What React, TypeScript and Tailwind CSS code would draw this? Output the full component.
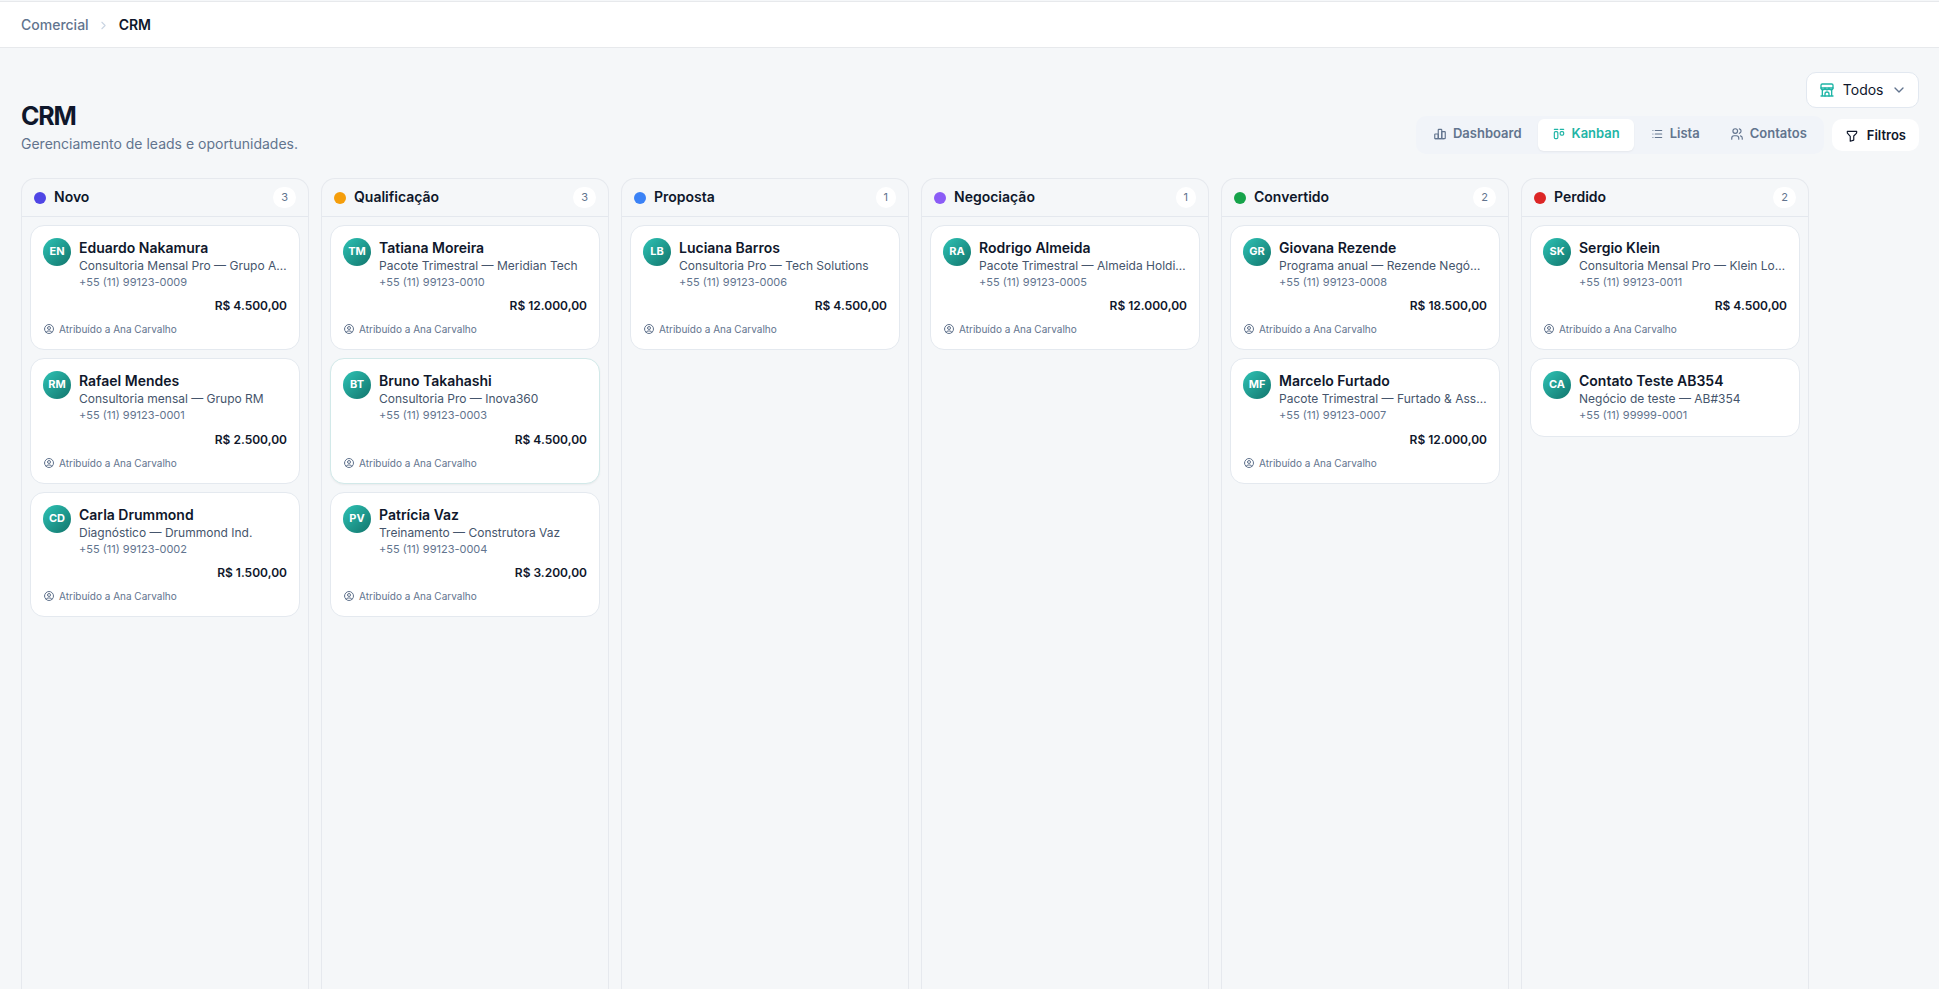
import {
  TbChartBar,
  TbChevronDown,
  TbChevronRight,
  TbFilter,
  TbLayoutKanban,
  TbList,
  TbUserCircle,
  TbUsers,
} from 'react-icons/tb';

interface Lead {
  initials: string;
  name: string;
  deal: string;
  phone: string;
  value?: string;
  active?: boolean;
}

interface Stage {
  title: string;
  dot: string;
  leads: Lead[];
}

const stages: Stage[] = [
  {
    title: 'Novo',
    dot: 'bg-[#4f46e5]',
    leads: [
      { initials: 'EN', name: 'Eduardo Nakamura', deal: 'Consultoria Mensal Pro — Grupo A…', phone: '+55 (11) 99123-0009', value: 'R$ 4.500,00' },
      { initials: 'RM', name: 'Rafael Mendes', deal: 'Consultoria mensal — Grupo RM', phone: '+55 (11) 99123-0001', value: 'R$ 2.500,00' },
      { initials: 'CD', name: 'Carla Drummond', deal: 'Diagnóstico — Drummond Ind.', phone: '+55 (11) 99123-0002', value: 'R$ 1.500,00' },
    ],
  },
  {
    title: 'Qualificação',
    dot: 'bg-[#f59e0b]',
    leads: [
      { initials: 'TM', name: 'Tatiana Moreira', deal: 'Pacote Trimestral — Meridian Tech', phone: '+55 (11) 99123-0010', value: 'R$ 12.000,00' },
      { initials: 'BT', name: 'Bruno Takahashi', deal: 'Consultoria Pro — Inova360', phone: '+55 (11) 99123-0003', value: 'R$ 4.500,00', active: true },
      { initials: 'PV', name: 'Patrícia Vaz', deal: 'Treinamento — Construtora Vaz', phone: '+55 (11) 99123-0004', value: 'R$ 3.200,00' },
    ],
  },
  {
    title: 'Proposta',
    dot: 'bg-[#3b82f6]',
    leads: [
      { initials: 'LB', name: 'Luciana Barros', deal: 'Consultoria Pro — Tech Solutions', phone: '+55 (11) 99123-0006', value: 'R$ 4.500,00' },
    ],
  },
  {
    title: 'Negociação',
    dot: 'bg-[#8b5cf6]',
    leads: [
      { initials: 'RA', name: 'Rodrigo Almeida', deal: 'Pacote Trimestral — Almeida Holdi…', phone: '+55 (11) 99123-0005', value: 'R$ 12.000,00' },
    ],
  },
  {
    title: 'Convertido',
    dot: 'bg-[#16a34a]',
    leads: [
      { initials: 'GR', name: 'Giovana Rezende', deal: 'Programa anual — Rezende Negó…', phone: '+55 (11) 99123-0008', value: 'R$ 18.500,00' },
      { initials: 'MF', name: 'Marcelo Furtado', deal: 'Pacote Trimestral — Furtado & Ass…', phone: '+55 (11) 99123-0007', value: 'R$ 12.000,00' },
    ],
  },
  {
    title: 'Perdido',
    dot: 'bg-[#dc2626]',
    leads: [
      { initials: 'SK', name: 'Sergio Klein', deal: 'Consultoria Mensal Pro — Klein Lo…', phone: '+55 (11) 99123-0011', value: 'R$ 4.500,00' },
      { initials: 'CA', name: 'Contato Teste AB354', deal: 'Negócio de teste — AB#354', phone: '+55 (11) 99999-0001' },
    ],
  },
];

const tabs = [
  { label: 'Dashboard', icon: TbChartBar },
  { label: 'Kanban', icon: TbLayoutKanban },
  { label: 'Lista', icon: TbList },
  { label: 'Contatos', icon: TbUsers },
];

function StoreIcon() {
  return (
    <svg
      viewBox="0 0 24 24"
      className="size-4 text-[#1fb5a6]"
      fill="none"
      stroke="currentColor"
      strokeWidth="2"
      strokeLinecap="round"
      strokeLinejoin="round"
    >
      <path d="M5 3h14a2 2 0 0 1 2 2v4H3V5a2 2 0 0 1 2-2z" />
      <path d="M3 9a3 2.6 0 0 0 6 0a3 2.6 0 0 0 6 0a3 2.6 0 0 0 6 0" />
      <path d="M5 11.5V21M19 11.5V21M3 21h18" />
      <path d="M9 21v-3a3 3 0 0 1 6 0v3" />
    </svg>
  );
}

function LeadCard({ lead }: { lead: Lead }) {
  return (
    <div
      className={`rounded-[14px] border bg-white p-3 ${
        lead.value ? 'h-[125.45px]' : 'h-[78.5px]'
      } ${lead.active ? 'border-[#d2e9e9] shadow-xs' : 'border-[#e4e9ef]'}`}
    >
      <div className="flex gap-2">
        <div className="flex size-7 shrink-0 items-center justify-center rounded-full bg-linear-to-br from-[#2ec4b6] to-[#12756c] pb-0.5 text-[11px] font-bold text-white">
          {lead.initials}
        </div>
        <div className="min-w-0 flex-1 pt-px">
          <p className="text-sm leading-[17.7px] font-semibold whitespace-nowrap">{lead.name}</p>
          <p className="text-xs leading-[18px] whitespace-nowrap text-slate-600">{lead.deal}</p>
          <p className="text-[11px] leading-[14px] text-slate-500">{lead.phone}</p>
        </div>
      </div>
      {lead.value && (
        <>
          <p className="mt-[9.6px] text-right text-xs leading-4 font-semibold">{lead.value}</p>
          <div className="mt-[7px] flex items-center gap-1 text-[10px] leading-4 text-slate-500">
            <TbUserCircle className="size-3" />
            <span>Atribuído a Ana Carvalho</span>
          </div>
        </>
      )}
    </div>
  );
}

export default function App() {
  return (
    <div className="flex h-screen flex-col overflow-hidden bg-[#f5f7f9] pt-px font-[Inter,sans-serif] text-slate-900">
      <header className="flex h-[47px] shrink-0 items-center gap-[9px] border-y border-[#e7e9ec] bg-white px-[21px] pt-px text-sm">
        <span className="-mr-px font-medium text-slate-500">Comercial</span>
        <TbChevronRight className="size-[13px] text-slate-300" />
        <span className="font-semibold">CRM</span>
      </header>

      <div className="flex shrink-0 items-end justify-between pt-6 pr-5 pl-[21px]">
        <div>
          <h1 className="mb-0.5 text-[25px] leading-8 font-bold tracking-[-0.05em]">CRM</h1>
          <p className="text-sm text-slate-500">Gerenciamento de leads e oportunidades.</p>
        </div>
        <div className="flex flex-col items-end gap-2">
          <button className="flex h-9 items-center gap-[7.5px] rounded-[10px] border border-[#e2e8f0] bg-white pr-[11px] pl-3 text-sm">
            <StoreIcon />
            Todos
            <TbChevronDown className="size-4 text-slate-500" />
          </button>
          <div className="flex items-center gap-2">
            <div className="flex items-center gap-0.5 rounded-[10px] bg-[#f1f4f9] p-[3px]">
              {tabs.map(({ label, icon: Icon }) => (
                <button
                  key={label}
                  className={`flex h-8 items-center gap-1.5 rounded-md px-3.5 pb-[2px] text-[13px] font-semibold ${
                    label === 'Kanban' ? 'bg-white text-[#1fb5a6] shadow-xs' : 'text-slate-500'
                  }`}
                >
                  <Icon className="size-3.5" />
                  {label}
                </button>
              ))}
            </div>
            <button className="flex h-8 items-center gap-2 rounded-[10px] bg-white px-[13px] pt-px text-[13px] font-semibold">
              <TbFilter className="size-3.5" />
              Filtros
            </button>
          </div>
        </div>
      </div>

      <main className="mt-6 flex min-h-0 flex-1 gap-3 px-[21px]">
        {stages.map((stage) => (
          <section
            key={stage.title}
            className="flex w-72 shrink-0 flex-col rounded-t-[14px] border border-b-0 border-[#e6e9ee]"
          >
            <div className="flex h-[38px] items-center gap-2 border-b border-[#e4e8ee] px-3">
              <span className={`size-3 rounded-full ${stage.dot}`} />
              <h2 className="pb-0.5 text-sm font-semibold">{stage.title}</h2>
              <span className="ml-auto rounded-full bg-white px-2 py-0.5 text-[11px] text-slate-500">
                {stage.leads.length}
              </span>
            </div>
            <div className="flex flex-col gap-2 p-2">
              {stage.leads.map((lead) => (
                <LeadCard key={lead.name} lead={lead} />
              ))}
            </div>
          </section>
        ))}
      </main>
    </div>
  );
}
